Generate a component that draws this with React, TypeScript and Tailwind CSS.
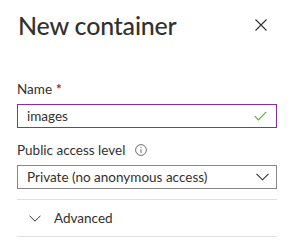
import React, { useState } from 'react';

export default function App() {
  const [name, setName] = useState('images');
  const [open, setOpen] = useState(false);

  return (
    <div className="w-[297px] h-[250px] bg-white overflow-hidden text-[#323130]" style={{ fontFamily: 'Lato, "Noto Sans", sans-serif' }}>
      <div className="flex items-center justify-between pl-[18px] pr-[29px] pt-[8px] h-[42px]">
        <h1 className="text-[25px] font-medium leading-none tracking-[-0.2px]">New container</h1>
        <button className="w-[14px] h-[14px] flex items-center justify-center text-[#323130]">
          <svg width="12" height="12" viewBox="0 0 12 12" fill="none" stroke="currentColor" strokeWidth="1.1">
            <path d="M0.5 0.5l11 11M11.5 0.5l-11 11" />
          </svg>
        </button>
      </div>

      <div className="px-[17px] pt-[38px]">
        <label className="flex items-center text-[13.5px] leading-[18px] mb-[6px]">
          Name <span className="text-[#a4262c] font-bold ml-[4px]">*</span>
        </label>
        <div className="flex items-center h-[24px] w-[260px] border border-[#8a2da5] px-[9px]">
          <input
            value={name}
            onChange={(e) => setName(e.target.value)}
            className="flex-1 min-w-0 outline-none text-[13.5px] leading-none bg-transparent"
          />
          <svg width="13" height="10" viewBox="0 0 13 10" fill="none" stroke="#5fae3a" strokeWidth="1.2">
            <path d="M0.8 5.2l3.6 3.6L12.3 0.9" />
          </svg>
        </div>

        <label className="flex items-center text-[13.5px] leading-[18px] mt-[13px] mb-[6px]">
          Public access level
          <svg className="ml-[10px]" width="12" height="12" viewBox="0 0 12 12" fill="none" stroke="#605e5c" strokeWidth="0.9">
            <circle cx="6" cy="6" r="5.4" />
            <path d="M6 5.2v3.6" />
            <circle cx="6" cy="3.5" r="0.5" fill="#605e5c" stroke="none" />
          </svg>
        </label>
        <div className="flex items-center justify-between h-[24px] w-[260px] border border-[#8a8886] pl-[9px] pr-[7px] text-[13.5px]">
          <span>Private (no anonymous access)</span>
          <svg width="13" height="8" viewBox="0 0 13 8" fill="none" stroke="#323130" strokeWidth="1.1">
            <path d="M0.5 0.8l6 6 6-6" />
          </svg>
        </div>

        <div className="w-[260px] mt-[10px] border-t border-[#e1dfdd]">
          <button onClick={() => setOpen(!open)} className="flex items-center h-[36px] pl-[12px] text-[13.5px] text-[#323130]">
            <svg width="12" height="7" viewBox="0 0 12 7" fill="none" stroke="#323130" strokeWidth="1">
              <path d="M0.5 0.7l5.5 5.5 5.5-5.5" />
            </svg>
            <span className="ml-[13px]">Advanced</span>
          </button>
        </div>
        <div className="w-[260px] border-t border-[#e1dfdd]" />
      </div>
    </div>
  );
}
